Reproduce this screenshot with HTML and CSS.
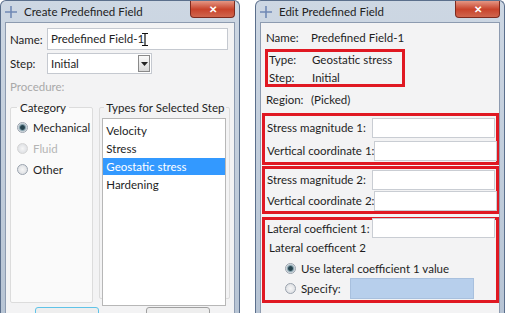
FILE: index.html
```html
<!DOCTYPE html>
<html lang="en">
<head>
  <meta charset="UTF-8">
  <title>Predefined Field</title>
  <link rel="stylesheet" href="styles.css">
</head>
<body>
  <div class="window create">
    <div class="titlebar">
      <svg class="app-icon" width="12" height="12" viewBox="0 0 12 12"><path d="M0 6H12M6 0V12" stroke="#7089b5" stroke-width="1.6"/></svg>
      <span class="title">Create Predefined Field</span>
      <span class="close">&#x2715;</span>
    </div>
    <div class="client">
      <div class="row">
        <label class="lbl">Name:</label>
        <div class="textbox">Predefined Field-1<svg class="caret" width="6" height="13" viewBox="0 0 6 13"><path d="M0 .5H6M0 12.5H6M3 .5V12.5" stroke="#111" stroke-width="1.2" fill="none"/></svg></div>
      </div>
      <div class="row">
        <label class="lbl">Step:</label>
        <div class="combo">Initial<span class="combo-btn"><svg width="7" height="4" viewBox="0 0 7 4"><path d="M0 0H7L3.5 4Z" fill="#222"/></svg></span></div>
      </div>
      <div class="muted proc">Procedure:</div>
      <div class="groups">
        <fieldset class="group cat">
          <legend>Category</legend>
          <div class="radio on">Mechanical</div>
          <div class="radio off">Fluid</div>
          <div class="radio">Other</div>
        </fieldset>
        <fieldset class="group types">
          <legend>Types for Selected Step</legend>
          <ul class="list">
            <li>Velocity</li>
            <li>Stress</li>
            <li class="sel">Geostatic stress</li>
            <li>Hardening</li>
          </ul>
        </fieldset>
      </div>
      <div class="buttons">
        <span class="btn focus"></span>
        <span class="btn"></span>
      </div>
    </div>
  </div>

  <div class="window edit">
    <div class="titlebar">
      <svg class="app-icon" width="12" height="12" viewBox="0 0 12 12"><path d="M0 6H12M6 0V12" stroke="#7089b5" stroke-width="1.6"/></svg>
      <span class="title">Edit Predefined Field</span>
      <span class="close">&#x2715;</span>
    </div>
    <div class="client">
      <div class="info"><span class="key">Name:</span>Predefined Field-1</div>
      <div class="mark mark-top">
        <div class="info"><span class="key">Type:</span>Geostatic stress</div>
        <div class="info"><span class="key">Step:</span>Initial</div>
      </div>
      <div class="info region"><span class="key">Region:</span>(Picked)</div>
      <div class="mark mark-1">
        <div class="field"><span>Stress magnitude 1:</span><span class="input"></span></div>
        <div class="field"><span>Vertical coordinate 1:</span><span class="input"></span></div>
      </div>
      <div class="mark mark-2">
        <div class="field"><span>Stress magnitude 2:</span><span class="input"></span></div>
        <div class="field"><span>Vertical coordinate 2:</span><span class="input"></span></div>
      </div>
      <div class="mark mark-3">
        <div class="field lateral"><span>Lateral coefficient 1:</span><span class="input"></span></div>
        <div class="sub">Lateral coefficent 2</div>
        <div class="radio on indent">Use lateral coefficient 1 value</div>
        <div class="radio indent specify">Specify: <span class="input blue"></span></div>
      </div>
    </div>
  </div>
</body>
</html>
```

FILE: styles.css
```css
body {
  margin: 0;
  width: 505px;
  height: 313px;
  overflow: hidden;
  background: #fff;
  font-family: Lato, "Noto Sans", sans-serif;
  font-size: 11.5px;
  color: #1e1e1e;
  display: flex;
  gap: 15px;
  white-space: nowrap;
}
.window {
  box-sizing: border-box;
  background: linear-gradient(#cdd7e3, #b7c4d4);
  border: 1px solid #5b6f8c;
  border-bottom: none;
  border-radius: 6px 6px 0 0;
  padding: 0 4px;
  display: flex;
  flex-direction: column;
  height: 313px;
  overflow: hidden;
}
.create {
  width: 240px;
}
.edit {
  width: 250px;
}
.titlebar {
  flex: none;
  height: 21px;
  display: flex;
  align-items: center;
  gap: 7px;
  position: relative;
}
.title {
  font-size: 11.5px;
  color: #222;
}
.close {
  position: absolute;
  right: 0;
  top: -1px;
  width: 43px;
  height: 17px;
  background: linear-gradient(#e8a08e, #c8432b 55%, #d0664e);
  border: 1px solid #7d2a1e;
  border-top: none;
  border-radius: 0 0 4px 4px;
  color: #fff;
  font-size: 10px;
  font-weight: bold;
  display: flex;
  align-items: center;
  justify-content: center;
}
.client {
  flex: 1;
  background: #f3f3f4;
  border: 1px solid #8d9bb0;
  border-bottom: none;
  padding: 5px 4px 0 4px;
}
.edit .client {
  padding-right: 0;
}
.row {
  display: flex;
  align-items: center;
  margin-bottom: 3px;
}
.lbl {
  width: 37px;
}
.textbox {
  flex: 1;
  height: 20px;
  background: #fff;
  border: 1px solid #c5c9d0;
  padding-left: 3px;
  line-height: 20px;
  margin-right: 2px;
  display: flex;
  align-items: center;
}
.caret {
  margin-left: -2px;
}
.combo {
  width: 100px;
  height: 19px;
  background: #fff;
  border: 1px solid #c5c9d0;
  padding-left: 3px;
  line-height: 19px;
  display: flex;
  justify-content: space-between;
}
.combo-btn {
  width: 10px;
  margin: 1px;
  border: 1px solid #8a8a8a;
  background: linear-gradient(#fafafa, #d8d8d8);
  display: flex;
  align-items: center;
  justify-content: center;
}
.muted {
  color: #a9a9a9;
}
.proc {
  margin: 6px 0 8px;
}
.groups {
  display: flex;
  gap: 6px;
}
.group {
  margin: 0;
  border: 1px solid #dcdcdc;
  border-radius: 2px;
  padding: 0 2px;
  height: 200px;
}
.group legend {
  padding: 0 3px;
  margin-left: 4px;
}
.cat {
  width: 74px;
  background: #fafafa;
}
.types {
  flex: 1;
  height: 196px;
  padding: 0 3px 0 2px;
}
.types legend {
  margin-left: 2px;
  padding: 0 2px;
}
.radio {
  display: flex;
  align-items: center;
  gap: 5px;
  height: 21px;
}
.radio::before {
  content: "";
  width: 9px;
  height: 9px;
  border-radius: 50%;
  border: 1px solid #9aa3ae;
  background: radial-gradient(#f6f6f6, #d6d9de);
}
.radio.on::before {
  background: radial-gradient(#26434e 30%, #7d9aa6 45%, #e4e8ec 70%);
}
.radio.off {
  color: #b5b5b5;
}
.radio.off::before {
  border-color: #d4d4d4;
}
.cat .radio {
  margin-left: 4px;
}
.cat .radio:first-of-type {
  margin-top: 3px;
}
.list {
  list-style: none;
  margin: 4px 0 0;
  padding: 3px 0;
  height: 180px;
  background: #fff;
  border: 1px solid #b7b7b7;
}
.list li {
  height: 17px;
  line-height: 17px;
  padding-left: 3px;
  margin-bottom: 1px;
}
.list .sel {
  background: #3399ff;
  color: #fff;
}
.buttons {
  display: flex;
  gap: 47px;
  padding: 4px 0 0 25px;
}
.btn {
  width: 62px;
  height: 20px;
  border: 1px solid #a0a0a0;
  border-radius: 3px;
  background: #eee;
}
.btn.focus {
  border-color: #5fc3e8;
}
.info {
  display: flex;
  height: 19px;
  align-items: center;
  padding-left: 1px;
}
.key {
  width: 45px;
}
.mark {
  border: 3px solid #e01822;
  margin-left: -3px;
  padding: 0 1px 0 2px;
}
.mark-top {
  width: 134px;
  height: 32px;
  margin: 2px 0 3px 0;
  padding: 0;
}
.mark-top .info {
  height: 15px;
}
.mark-top .info + .info {
  margin-top: 3px;
}
.mark-top .key {
  width: 43px;
}
.region {
  margin-bottom: 4px;
}
.field {
  display: flex;
  align-items: center;
  justify-content: space-between;
  height: 23px;
}
.mark-2 {
  margin-top: 1px;
}
.mark-2 .field {
  height: 21px;
}
.mark-3 {
  margin-top: 3px;
}
.mark-3 .lateral {
  height: 16px;
}
.input {
  flex: none;
  width: 121px;
  height: 18px;
  background: #fff;
  border: 1px solid #c9cdd3;
}
.sub {
  height: 24px;
  line-height: 24px;
  padding-left: 2px;
}
.indent {
  padding-left: 18px;
  height: 17px;
}
.indent.specify {
  height: 23px;
}
.specify .input {
  margin-left: 4px;
}
.input.blue {
  background: #b7cfec;
  border-color: #a8c0de;
  width: 122px;
  height: 19px;
}
```
